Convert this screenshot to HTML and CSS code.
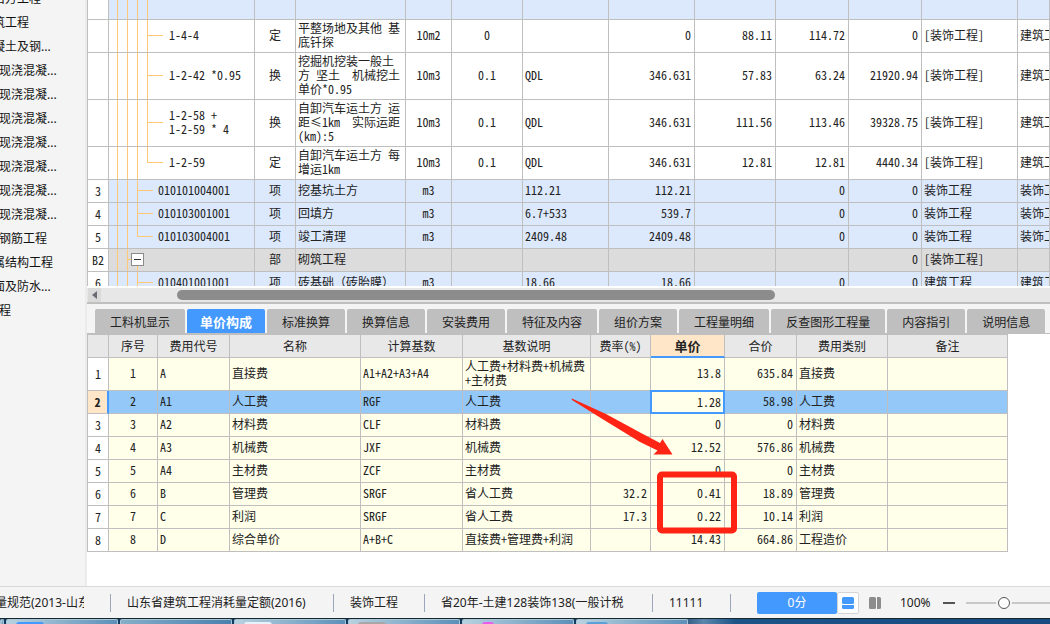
FILE: index.html
```html
<!DOCTYPE html>
<html lang="zh-CN">
<head>
<meta charset="utf-8">
<title>单价构成</title>
<link rel="stylesheet" href="styles.css">
</head>
<body>
<div class="workspace">
  <nav class="sidebar">
    <ul class="outline">
      <li class="group">石方工程</li>
      <li class="group">筑工程</li>
      <li class="group">凝土及钢...</li>
      <li>现浇混凝...</li>
      <li>现浇混凝...</li>
      <li>现浇混凝...</li>
      <li>现浇混凝...</li>
      <li>现浇混凝...</li>
      <li>现浇混凝...</li>
      <li>现浇混凝...</li>
      <li>钢筋工程</li>
      <li class="group">属结构工程</li>
      <li class="group">面及防水...</li>
      <li>程</li>
    </ul>
  </nav>
  <main class="main">
    <section class="upper">
      <div class="viewport">
        <table class="grid items">
          <colgroup>
            <col class="w22"><col class="w146"><col class="w41"><col class="w110"><col class="w46"><col class="w71"><col class="w86"><col class="w86"><col class="w81"><col class="w73"><col class="w73"><col class="w96"><col>
          </colgroup>
          <tbody>
            <tr class="blue first"><th></th><td class="tree t-all"></td><td></td><td></td><td></td><td></td><td></td><td></td><td></td><td></td><td></td><td></td><td></td></tr>
            <tr><th></th><td class="tree t-mid4">1-4-4</td><td class="c">定</td><td>平整场地及其他 基<br>底钎探</td><td class="c">10m2</td><td class="c">0</td><td></td><td class="r">0</td><td class="r">88.11</td><td class="r">114.72</td><td class="r">0</td><td>[装饰工程]</td><td>建筑工程</td></tr>
            <tr class="tall"><th></th><td class="tree t-mid4">1-2-42 *0.95</td><td class="c">换</td><td>挖掘机挖装一般土<br>方 坚土  机械挖土<br>单价*0.95</td><td class="c">10m3</td><td class="c">0.1</td><td>QDL</td><td class="r">346.631</td><td class="r">57.83</td><td class="r">63.24</td><td class="r">21920.94</td><td>[装饰工程]</td><td>建筑工程</td></tr>
            <tr class="tall"><th></th><td class="tree t-mid4">1-2-58 +<br>1-2-59 * 4</td><td class="c">换</td><td>自卸汽车运土方 运<br>距≤1km  实际运距<br>(km):5</td><td class="c">10m3</td><td class="c">0.1</td><td>QDL</td><td class="r">346.631</td><td class="r">111.56</td><td class="r">113.46</td><td class="r">39328.75</td><td>[装饰工程]</td><td>建筑工程</td></tr>
            <tr><th></th><td class="tree t-end4">1-2-59</td><td class="c">定</td><td>自卸汽车运土方 每<br>增运1km</td><td class="c">10m3</td><td class="c">0.1</td><td>QDL</td><td class="r">346.631</td><td class="r">12.81</td><td class="r">12.81</td><td class="r">4440.34</td><td>[装饰工程]</td><td>建筑工程</td></tr>
            <tr class="blue"><th>3</th><td class="tree t-mid3">010101004001</td><td class="c">项</td><td>挖基坑土方</td><td class="c">m3</td><td></td><td>112.21</td><td class="r">112.21</td><td></td><td class="r">0</td><td class="r">0</td><td>装饰工程</td><td>装饰工程</td></tr>
            <tr class="blue"><th>4</th><td class="tree t-mid3">010103001001</td><td class="c">项</td><td>回填方</td><td class="c">m3</td><td></td><td>6.7+533</td><td class="r">539.7</td><td></td><td class="r">0</td><td class="r">0</td><td>装饰工程</td><td>装饰工程</td></tr>
            <tr class="blue"><th>5</th><td class="tree t-end3">010103004001</td><td class="c">项</td><td>竣工清理</td><td class="c">m3</td><td></td><td>2409.48</td><td class="r">2409.48</td><td></td><td class="r">0</td><td class="r">0</td><td>装饰工程</td><td>装饰工程</td></tr>
            <tr class="gray"><th>B2</th><td class="tree t-node"><button class="toggle" type="button" aria-label="折叠"></button></td><td class="c">部</td><td>砌筑工程</td><td></td><td></td><td></td><td></td><td></td><td></td><td class="r">0</td><td>[装饰工程]</td><td></td></tr>
            <tr class="blue"><th>6</th><td class="tree t-mid3">010401001001</td><td class="c">项</td><td class="wide">砖基础（砖胎膜）</td><td class="c">m3</td><td></td><td>18.66</td><td class="r">18.66</td><td></td><td class="r">0</td><td class="r">0</td><td>建筑工程</td><td>建筑工程</td></tr>
          </tbody>
        </table>
      </div>
      <div class="scrollbar">
        <button class="scroll-left" type="button" aria-label="向左滚动"><svg width="5" height="8" viewBox="0 0 5 8"><path d="M5 0v8L0 4z" fill="#6b6b78"/></svg></button>
        <div class="track"><div class="thumb"></div></div>
      </div>
    </section>
    <section class="lower">
      <div class="tabs" role="tablist">
        <button type="button" role="tab">工料机显示</button>
        <button type="button" role="tab" class="active" aria-selected="true">单价构成</button>
        <button type="button" role="tab">标准换算</button>
        <button type="button" role="tab">换算信息</button>
        <button type="button" role="tab">安装费用</button>
        <button type="button" role="tab">特征及内容</button>
        <button type="button" role="tab">组价方案</button>
        <button type="button" role="tab">工程量明细</button>
        <button type="button" role="tab">反查图形工程量</button>
        <button type="button" role="tab">内容指引</button>
        <button type="button" role="tab">说明信息</button>
      </div>
      <div class="sheet">
        <table class="grid price">
          <colgroup>
            <col class="w22"><col class="w49"><col class="w72"><col class="w131"><col class="w102"><col class="w128"><col class="w60"><col class="w74"><col class="w72"><col class="w91"><col class="w120">
          </colgroup>
          <thead>
            <tr><th></th><th>序号</th><th>费用代号</th><th>名称</th><th>计算基数</th><th>基数说明</th><th>费率(%)</th><th class="current-col">单价</th><th>合价</th><th>费用类别</th><th>备注</th></tr>
          </thead>
          <tbody>
            <tr class="double"><th>1</th><td class="c">1</td><td>A</td><td>直接费</td><td>A1+A2+A3+A4</td><td>人工费+材料费+机械费<br>+主材费</td><td></td><td class="r">13.8</td><td class="r">635.84</td><td>直接费</td><td></td></tr>
            <tr class="selected"><th>2</th><td class="c">2</td><td>A1</td><td>人工费</td><td>RGF</td><td>人工费</td><td></td><td class="editing"><input type="text" value="1.28" aria-label="单价"></td><td class="r">58.98</td><td>人工费</td><td></td></tr>
            <tr><th>3</th><td class="c">3</td><td>A2</td><td>材料费</td><td>CLF</td><td>材料费</td><td></td><td class="r">0</td><td class="r">0</td><td>材料费</td><td></td></tr>
            <tr><th>4</th><td class="c">4</td><td>A3</td><td>机械费</td><td>JXF</td><td>机械费</td><td></td><td class="r">12.52</td><td class="r">576.86</td><td>机械费</td><td></td></tr>
            <tr><th>5</th><td class="c">5</td><td>A4</td><td>主材费</td><td>ZCF</td><td>主材费</td><td></td><td class="r">0</td><td class="r">0</td><td>主材费</td><td></td></tr>
            <tr><th>6</th><td class="c">6</td><td>B</td><td>管理费</td><td>SRGF</td><td>省人工费</td><td class="r">32.2</td><td class="r">0.41</td><td class="r">18.89</td><td>管理费</td><td></td></tr>
            <tr><th>7</th><td class="c">7</td><td>C</td><td>利润</td><td>SRGF</td><td>省人工费</td><td class="r">17.3</td><td class="r">0.22</td><td class="r">10.14</td><td>利润</td><td></td></tr>
            <tr><th>8</th><td class="c">8</td><td>D</td><td>综合单价</td><td>A+B+C</td><td>直接费+管理费+利润</td><td></td><td class="r">14.43</td><td class="r">664.86</td><td>工程造价</td><td></td></tr>
          </tbody>
        </table>
        <svg class="markup" width="170" height="140" viewBox="570 396 170 140" aria-hidden="true">
          <path d="M571.500 398.500L573 399L606 414L641 433L660 443L662.500 439L672.500 454.500L653.500 454.500L657.500 450.500L640 442L604 420L572 400z" fill="#ff2414"/>
          <rect x="660" y="474.500" width="74" height="56" rx="2" fill="none" stroke="#ff2414" stroke-width="6"/>
        </svg>
      </div>
    </section>
  </main>
</div>
<footer class="status">
  <span class="info spec">量规范(2013-山东</span>
  <span class="info quota">山东省建筑工程消耗量定额(2016)</span>
  <span class="info trade">装饰工程</span>
  <span class="info tax">省20年-土建128装饰138(一般计税</span>
  <span class="info code">11111</span>
  <button class="score" type="button">0分</button>
  <button class="view on" type="button" aria-label="上下布局"><svg width="12" height="12" viewBox="0 0 12 12" fill="#4499ff"><rect width="12" height="7" rx="1.500"/><path d="M0 8h12v2.500a1.500 1.500 0 0 1-1.500 1.500h-9A1.500 1.500 0 0 1 0 10.500z"/></svg></button>
  <button class="view split" type="button" aria-label="左右布局"><svg width="12" height="12" viewBox="0 0 12 12" fill="#8c8c8c"><rect width="7" height="12" rx="1.500"/><path d="M8 0h2.500A1.500 1.500 0 0 1 12 1.500v9a1.500 1.500 0 0 1-1.500 1.500H8z"/></svg></button>
  <span class="percent">100%</span>
  <button class="minus" type="button" aria-label="缩小"></button>
  <input class="zoom" type="range" min="0" max="100" value="44" aria-label="缩放">
</footer>
<div class="taskbar">
  <span class="task stub"></span>
  <span class="task"><i class="peek blue-icon"></i></span>
  <span class="task plain"></span>
  <span class="task"><i class="peek pale-icon"></i></span>
  <span class="task"><i class="peek gray-icon"></i></span>
  <span class="task"><i class="peek pink-icon"></i></span>
  <span class="task"><i class="peek sky-icon"></i></span>
</div>
</body>
</html>
```
FILE: styles.css
```css
* { box-sizing: border-box; }

body {
  margin: 0;
  height: 100vh;
  display: flex;
  flex-direction: column;
  overflow: hidden;
  background: #fff;
  color: #222;
  font-family: "Noto Sans CJK SC", sans-serif;
  font-size: 12px;
  line-height: 14px;
}

button, input { font: inherit; color: inherit; margin: 0; padding: 0; border: 0; }

.workspace { flex: 1; min-height: 0; display: flex; }

/* Outline */
.sidebar {
  flex: 0 0 87px;
  overflow: hidden;
  background: #f4f4f4;
  border-right: 2px solid #ebebeb;
  color: #111;
  font-family: "Noto Sans", "Noto Sans CJK SC", sans-serif;
}
.outline { list-style: none; margin: -13px 0 0 -1px; padding: 0; }
.outline li { line-height: 24px; white-space: nowrap; }
.outline .group { margin-left: -6px; }

.main { flex: 1; min-width: 0; display: flex; flex-direction: column; }

/* Grids */
.grid {
  table-layout: fixed;
  border-collapse: separate;
  border-spacing: 0;
  border-left: 1px solid #bfbfbf;
  font-feature-settings: "hwid";
  white-space: pre;
}
.grid td, .grid th {
  height: 23px;
  padding: 0 2px 2px;
  overflow: hidden;
  border: solid #bfbfbf;
  border-width: 0 1px 1px 0;
  font-weight: 400;
  text-align: left;
  vertical-align: middle;
}
.grid th { padding: 0; background: #fff; text-align: center; }
.grid .c { text-align: center; }
.grid .r { text-align: right; padding-right: 3px; }
.grid .wide { font-feature-settings: normal; }

.w22 { width: 21px; }
.w146 { width: 146px; }
.w41 { width: 41px; }
.w110 { width: 110px; }
.w46 { width: 46px; }
.w71 { width: 71px; }
.w86 { width: 86px; }
.w81 { width: 81px; }
.w73 { width: 73px; }
.w96 { width: 96px; }
.w49 { width: 49px; }
.w72 { width: 72px; }
.w131 { width: 131px; }
.w102 { width: 102px; }
.w128 { width: 128px; }
.w60 { width: 60px; }
.w74 { width: 74px; }
.w91 { width: 91px; }
.w120 { width: 120px; }

/* Upper pane */
.upper {
  flex: 302 1 0;
  min-height: 0;
  display: flex;
  flex-direction: column;
  border-bottom: 2px solid #bfbfbf;
}
.viewport { flex: 1; min-height: 0; overflow: hidden; margin-bottom: 2px; }
.items { width: 100%; }
.items td, .items th { height: 33px; }
.items .tall td { height: 47px; }
.items .blue td, .items .blue th, .items .gray td, .items .gray th { height: 23px; }
.items .first td, .items .first th { height: 20px; }
.blue td { background-color: #dce9fd; }
.gray td { background-color: #dcdcdc; }
.gray th, .blue th { background: #fff; }

/* Tree guides: verticals every 10px, then the branch to the label */
.grid .tree {
  --line: linear-gradient(#ffc877, #ffc877);
  --branch: linear-gradient(#ffc877 50%, transparent 50%);
  padding-left: 60px;
  background-repeat: no-repeat;
}
.grid .t-all {
  background-image: var(--line), var(--line), var(--line), var(--line);
  background-size: 1px 100%;
  background-position: 8px 0, 18px 0, 28px 0, 38px 0;
}
.grid .t-mid4, .grid .t-end4 {
  background-image: var(--line), var(--line), var(--line), var(--line), var(--branch);
  background-size: 1px 100%, 1px 100%, 1px 100%, 1px 100%, 16px 2px;
  background-position: 8px 0, 18px 0, 28px 0, 38px 0, 38px 50%;
}
.grid .t-end4 { background-size: 1px 100%, 1px 100%, 1px 100%, 1px 50%, 16px 2px; }
.grid .t-mid3, .grid .t-end3 {
  padding-left: 49px;
  background-image: var(--line), var(--line), var(--line), var(--branch);
  background-size: 1px 100%, 1px 100%, 1px 100%, 16px 2px;
  background-position: 8px 0, 18px 0, 28px 0, 28px 50%;
}
.grid .t-end3 { background-size: 1px 100%, 1px 100%, 1px 50%, 16px 2px; }
.grid .t-node {
  padding-left: 22px;
  background-image: var(--line), var(--line), var(--line), var(--branch);
  background-size: 1px 100%, 1px 100%, 1px 50%, 4px 2px;
  background-position: 8px 0, 18px 0, 28px 100%, 18px 50%;
}
.toggle {
  display: block;
  width: 13px;
  height: 13px;
  border: 1px solid #8c8c8c;
  background: linear-gradient(#333, #333) center / 7px 1px no-repeat #fff;
}

.scrollbar { flex: 0 0 14px; display: flex; background: #e7e7e7; border-left: 1px solid #e7e7e7; }
.scroll-left { width: 13px; display: flex; align-items: center; justify-content: center; background: #dadada; }
.track { flex: 1; padding: 2px 0; }
.thumb { width: 63%; height: 10px; margin-left: 8%; border-radius: 5px; background: #8c8c8c; }

/* Lower pane */
.lower { flex: 282 1 0; min-height: 0; display: flex; flex-direction: column; }
.tabs {
  display: flex;
  gap: 2px;
  padding: 5px 0 0 8px;
  background: #f4f4f4;
  border-bottom: 1px solid #bfbfbf;
}
.tabs button {
  height: 24px;
  padding: 2px 15px 0;
  flex: none;
  background: #bfbfbf;
  border-radius: 2px 2px 0 0;
  white-space: nowrap;
}
.tabs .active { padding: 2px 13px 0; background: #4499ff; color: #fff; font-size: 13px; font-weight: 700; }

.sheet { flex: 1; position: relative; }
.price { width: 921px; border-top: 1px solid #bfbfbf; }
.price td { background: #ffffea; }
.price thead th { background: #e8e8e8; padding: 0; }
.price .double td { height: 33px; }
.price .selected td { background: #93c8f8; }
.price .selected th {
  background: #ffe6c8;
  border-right: 2px solid #4499ff;
  font-weight: 700;
}
.price thead .current-col {
  background: #ffe6c8;
  border-bottom: 2px solid #4499ff;
  font-size: 13px;
  font-weight: 700;
}
.price .selected .editing { position: relative; padding: 0; overflow: visible; background: #ffffea; }
.editing::after {
  content: "";
  position: absolute;
  inset: -1px;
  border: 2px solid #4499ff;
  pointer-events: none;
}
.editing input {
  display: block;
  width: 100%;
  height: 22px;
  padding: 0 3px 2px 0;
  background: transparent;
  text-align: right;
  font-feature-settings: "hwid";
  outline: 0;
}
.markup { position: absolute; left: 483px; top: 62px; pointer-events: none; }

/* Status bar */
.status {
  flex: 0 0 32px;
  display: flex;
  align-items: center;
  background: #f4f4f4;
  border-top: 1px solid #d9d9d9;
  font-family: "Noto Sans", "Noto Sans CJK SC", sans-serif;
}
.info {
  flex: none;
  height: 18px;
  line-height: 18px;
  white-space: nowrap;
  overflow: hidden;
  border-right: 1px solid #9ba6b8;
  padding-left: 16px;
}
.spec { width: 84px; margin-right: 26px; padding: 0; border: 0; text-indent: -5px; }
.quota { width: 224px; border-left: 1px solid #9ba6b8; }
.trade { width: 91px; }
.tax { width: 228px; }
.code { width: 78px; }
.score {
  flex: none;
  width: 80px;
  height: 22px;
  margin-left: 26px;
  border-radius: 2px;
  background: #4499ff;
  color: #fff;
}
.view { flex: none; width: 22px; height: 22px; display: flex; align-items: center; justify-content: center; background: none; }
.view.on { background: #fff; border: 1px solid #d4d4d4; border-radius: 2px; }
.split { margin-left: 5px; }
.percent { width: 36px; margin: 0 7px 0 14px; }
.minus { flex: none; width: 12px; height: 2px; background: #555; }
.zoom {
  flex: 1 1 84px;
  min-width: 0;
  height: 16px;
  margin-left: 11px;
  appearance: none;
  background: linear-gradient(#c8c8c8, #c8c8c8) center / 100% 2px no-repeat;
}
.zoom::-webkit-slider-thumb {
  appearance: none;
  width: 12px;
  height: 12px;
  border: 1px solid #555;
  border-radius: 50%;
  background: #fff;
  box-shadow: 0 0 0 2px #f4f4f4;
}

/* Taskbar edge */
.taskbar {
  flex: 0 0 6px;
  display: flex;
  gap: 2px;
  overflow: hidden;
  border-top: 1px solid #14282e;
  background: linear-gradient(90deg, #123a5c 0 64%, #5b86ad 67%, #1c5488 70%, #174a80);
}
.task {
  width: 112px;
  height: 5px;
  padding-left: 9px;
  border: solid #a9c7d9;
  border-width: 1px 1px 0;
  border-radius: 2px 2px 0 0;
  background: linear-gradient(100deg, #b9d2df, #5c8fb8);
}
.task.stub { width: 4px; padding: 0; }
.task.plain { background: linear-gradient(100deg, #86aec8, #4a80ae); }
.peek { display: block; width: 28px; height: 4px; margin-top: 2px; border-radius: 3px 3px 0 0; }
.blue-icon { background: #4499ff; }
.pale-icon { background: #e8f2fa; }
.gray-icon { background: #a9a6a8; }
.pink-icon { width: 12px; margin-left: 10px; background: #e85cf0; }
.sky-icon { width: 22px; background: #5aa0d8; }
```
